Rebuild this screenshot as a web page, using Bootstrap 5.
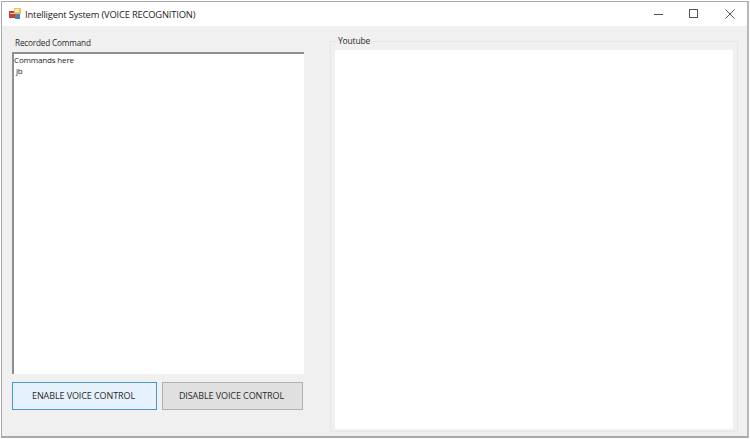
<!DOCTYPE html>
<html lang="en">
<head>
<meta charset="utf-8">
<title>Intelligent System (VOICE RECOGNITION)</title>
<link href="https://cdn.jsdelivr.net/npm/bootstrap@5.3.0/dist/css/bootstrap.min.css" rel="stylesheet">
<style>
html,body{height:439px;overflow:hidden;background:#fff}
body{padding:1px;font-family:"Open Sans","Noto Sans",sans-serif;color:#2a2a2a}
.winframe{width:748px;height:437px;border:1px solid #a8a8a8;border-right:2px solid #b8b8b8;border-bottom:2px solid #a8a8a8;background:#f0f0f0}
.titlebar{height:24px;background:#fff;padding-left:7px}
.appname{font-size:9.4px;letter-spacing:-.02em;margin-left:4px;line-height:25px;white-space:nowrap;color:#222}
.capbtn{width:36px;height:24px;padding-right:12px}
.capmin{padding-right:11px}
.clientarea{height:410px;padding:0 9px 0 10px}
.leftpane{width:292px;margin-right:26px}
.cmdlabel{font-size:8.2px;letter-spacing:-.02em;line-height:12px;margin:11px 0 3px 3px;color:#2a2a2a}
.cmdbox{height:322px;background:#fff;border-top:2px solid #8f8f8f;border-left:2px solid #8f8f8f;font-size:8px;letter-spacing:-.02em;line-height:11px;color:#222}
.cmdbox div+div{padding-left:2px}
.actionrow{margin-top:8px;gap:5px}
.vcbtn{height:28px;font-size:9px;letter-spacing:-.01em;border-radius:0;padding:0 2px 1px 0;color:#2a2a2a;line-height:1}
.vcon,.vcon:hover{width:145px;background:#e5f1fb;border:1px solid #4a9ac8}
.vcoff,.vcoff:hover{width:141px;background:#e0e0e0;border:1px solid #b0b0b0}
.ytframe{width:408px;height:391px;margin-top:15px;border:1px solid #e6e6e6;padding:8px 4px 1px 4px}
.ytlegend{font-size:8.5px;letter-spacing:-.02em;line-height:10px;background:#f0f0f0;padding:0 1px;margin:-14px 0 0 2px;width:max-content;color:#2a2a2a}
.ytview{height:379px;background:#fff;margin-top:4px}
</style>
</head>
<body>
<div class="winframe">
  <div class="titlebar d-flex align-items-center">
    <svg width="12" height="12" viewBox="0 0 12 12" aria-hidden="true">
      <rect x="0" y="3" width="6" height="7" fill="#c8402c"/>
      <rect x="1" y="5" width="4" height="1" fill="#f3c9a8"/>
      <rect x="5" y="0" width="7" height="6" fill="#e8c25a"/>
      <rect x="6" y="6" width="5" height="5" fill="#4b7fc4"/>
      <rect x="6" y="1" width="4" height="3" fill="#fbeeb8"/>
    </svg>
    <span class="appname">Intelligent System (VOICE RECOGNITION)</span>
    <div class="ms-auto d-flex">
      <div class="capbtn capmin d-flex align-items-center justify-content-end"><svg width="10" height="10" viewBox="0 0 10 10"><path d="M0 5.5H9" stroke="#555" stroke-width="1"/></svg></div>
      <div class="capbtn d-flex align-items-center justify-content-end"><svg width="10" height="10" viewBox="0 0 10 10"><rect x=".5" y=".5" width="8" height="8" fill="none" stroke="#555"/></svg></div>
      <div class="capbtn d-flex align-items-center justify-content-end"><svg width="10" height="10" viewBox="0 0 10 10"><path d="M.5 .5L9.5 9.5M9.5 .5L.5 9.5" stroke="#555" stroke-width="1"/></svg></div>
    </div>
  </div>
  <div class="clientarea d-flex">
    <div class="leftpane">
      <div class="cmdlabel">Recorded Command</div>
      <div class="cmdbox"><div>Commands here</div><div>jb</div></div>
      <div class="actionrow d-flex">
        <button type="button" class="btn vcbtn vcon">ENABLE VOICE CONTROL</button>
        <button type="button" class="btn vcbtn vcoff">DISABLE VOICE CONTROL</button>
      </div>
    </div>
    <div class="ytframe">
      <div class="ytlegend">Youtube</div>
      <div class="ytview"></div>
    </div>
  </div>
</div>
</body>
</html>
